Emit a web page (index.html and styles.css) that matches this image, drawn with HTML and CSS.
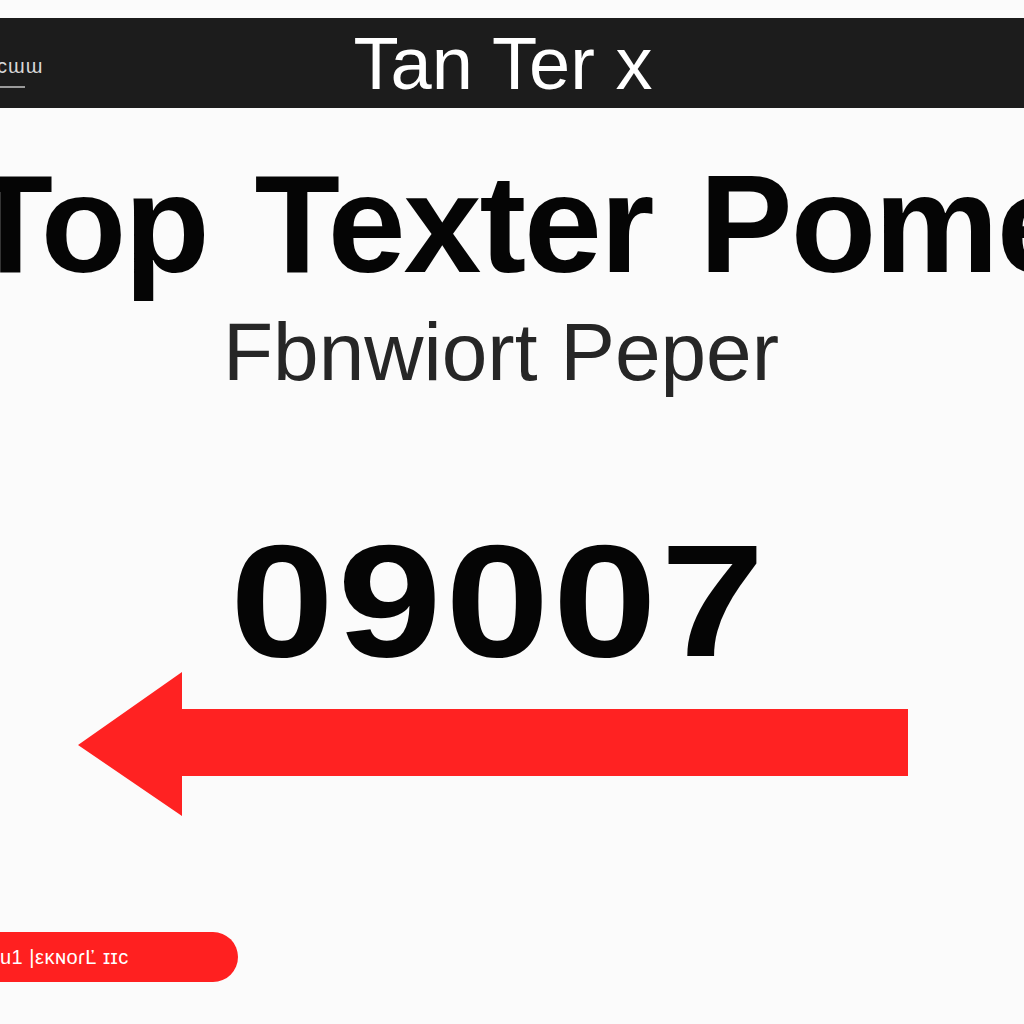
FILE: index.html
```html
<!DOCTYPE html>
<html lang="en">
<head>
<meta charset="utf-8">
<title>Tan Terx</title>
<link rel="stylesheet" href="styles.css">
</head>
<body>
<div class="page">
  <header class="bar">
    <div class="nav">
      <span class="nav-text">cɯɯ</span>
      <span class="nav-line"></span>
    </div>
    <div class="title">Tan Ter x</div>
    <div class="spacer"></div>
  </header>
  <main class="content">
    <h1 class="headline"><span>Top Texter Pome</span></h1>
    <p class="subtitle">Fbnwiort Peper</p>
    <div class="number"><span class="digits">09007</span></div>
    <svg class="arrow" width="830" height="144" viewBox="0 0 830 144" aria-hidden="true">
      <polygon points="0,73 104,0 104,37 830,37 830,104 104,104 104,144" fill="#ff2222"/>
    </svg>
    <div class="pill">u1 |εκɴoɾĽ ɪɪc</div>
  </main>
</div>
</body>
</html>
```

FILE: styles.css
```css
html, body {
  margin: 0;
  padding: 0;
  background: #fbfbfb;
  overflow: hidden;
}
.page {
  width: 1024px;
  height: 1024px;
  padding-top: 18px;
  box-sizing: border-box;
  font-family: "Liberation Sans", Arial, sans-serif;
  overflow: hidden;
}
.bar {
  height: 90px;
  background: #1c1c1c;
  display: grid;
  grid-template-columns: 1fr auto 1fr;
  align-items: center;
}
.nav {
  display: flex;
  flex-direction: column;
  align-self: stretch;
  padding-top: 38px;
  box-sizing: border-box;
}
.nav-text {
  color: #d8d8d8;
  font-size: 20px;
  line-height: 20px;
  margin-left: -3px;
  letter-spacing: 1px;
}
.nav-line {
  display: block;
  width: 25px;
  height: 2px;
  background: #9a9a9a;
  margin-top: 10px;
}
.title {
  color: #ffffff;
  font-size: 74px;
  line-height: 1;
  letter-spacing: 0;
  margin-top: 1px;
  padding-right: 18px;
}
.content {
  display: flex;
  flex-direction: column;
}
.headline {
  margin: 46px 0 0;
  display: flex;
  justify-content: center;
  font-size: 140px;
  line-height: 1;
  font-weight: 700;
  color: #050505;
  white-space: nowrap;
  letter-spacing: -2px;
  word-spacing: 10px;
  padding-left: 16px;
}
.subtitle {
  margin: 17px 0 0;
  text-align: center;
  font-size: 82px;
  line-height: 1;
  color: #262626;
  letter-spacing: 0;
  padding-right: 22px;
}
.number {
  margin-top: 144px;
  text-align: center;
  font-size: 160px;
  line-height: 0.8;
  font-weight: 700;
  color: #050505;
  padding-right: 26px;
}
.digits {
  display: inline-block;
  letter-spacing: 3px;
  transform: scaleX(1.17);
}
.arrow {
  display: block;
  margin: 7px 0 0 78px;
}
.pill {
  margin-top: 116px;
  width: 238px;
  height: 50px;
  box-sizing: border-box;
  background: #ff2020;
  border-radius: 0 25px 25px 0;
  color: #ffffff;
  font-size: 20px;
  line-height: 50px;
  padding-left: 0;
  white-space: nowrap;
  letter-spacing: 0.5px;
}
```
